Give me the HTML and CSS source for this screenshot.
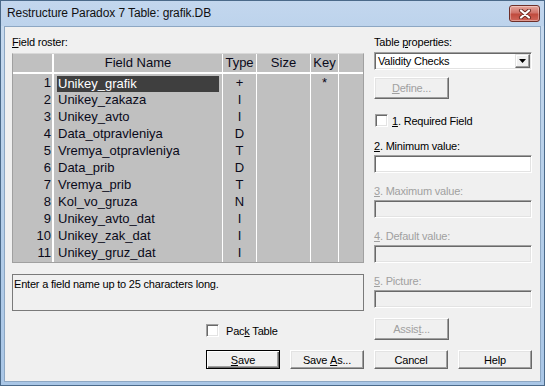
FILE: index.html
```html
<!DOCTYPE html>
<html lang="en">
<head>
    <meta charset="UTF-8">
    <title>Restructure Paradox 7 Table</title>
    <link rel="stylesheet" href="styles.css">
</head>
<body>
    <div class="window">
        <div class="titlebar">
            <span class="title">Restructure Paradox 7 Table: grafik.DB</span>
            <div class="close">
                <svg width="14" height="10" viewBox="0 0 14 10">
                    <path d="M3 1.5 L11 8.5 M11 1.5 L3 8.5" stroke="#6b2a22" stroke-width="4" stroke-linecap="round"/>
                    <path d="M3 1.5 L11 8.5 M11 1.5 L3 8.5" stroke="#fff" stroke-width="2.2" stroke-linecap="round"/>
                </svg>
            </div>
        </div>

        <div class="client">
            <div class="main">
                <div class="left">
                    <div class="label"><u>F</u>ield roster:</div>

                    <div class="roster">
                        <div class="col col-num">
                            <div class="head"></div>
                            <div class="cell">1</div>
                            <div class="cell">2</div>
                            <div class="cell">3</div>
                            <div class="cell">4</div>
                            <div class="cell">5</div>
                            <div class="cell">6</div>
                            <div class="cell">7</div>
                            <div class="cell">8</div>
                            <div class="cell">9</div>
                            <div class="cell">10</div>
                            <div class="cell">11</div>
                        </div>
                        <div class="col col-name">
                            <div class="head">Field Name</div>
                            <div class="cell"><span class="sel">Unikey_grafik</span></div>
                            <div class="cell">Unikey_zakaza</div>
                            <div class="cell">Unikey_avto</div>
                            <div class="cell">Data_otpravleniya</div>
                            <div class="cell">Vremya_otpravleniya</div>
                            <div class="cell">Data_prib</div>
                            <div class="cell">Vremya_prib</div>
                            <div class="cell">Kol_vo_gruza</div>
                            <div class="cell">Unikey_avto_dat</div>
                            <div class="cell">Unikey_zak_dat</div>
                            <div class="cell">Unikey_gruz_dat</div>
                        </div>
                        <div class="col col-type">
                            <div class="head">Type</div>
                            <div class="cell">+</div>
                            <div class="cell">I</div>
                            <div class="cell">I</div>
                            <div class="cell">D</div>
                            <div class="cell">T</div>
                            <div class="cell">D</div>
                            <div class="cell">T</div>
                            <div class="cell">N</div>
                            <div class="cell">I</div>
                            <div class="cell">I</div>
                            <div class="cell">I</div>
                        </div>
                        <div class="col col-size">
                            <div class="head">Size</div>
                        </div>
                        <div class="col col-key">
                            <div class="head">Key</div>
                            <div class="cell">*</div>
                        </div>
                        <div class="col col-end">
                            <div class="head"></div>
                        </div>
                    </div>

                    <div class="message">Enter a field name up to 25 characters long.</div>

                    <div class="pack">
                        <span class="check"></span>
                        <span>Pac<u>k</u> Table</span>
                    </div>
                </div>

                <div class="right">
                    <div class="label">Table <u>p</u>roperties:</div>
                    <div class="select">
                        <span class="select-text">Validity Checks</span>
                        <span class="arrow">
                            <svg width="7" height="4" viewBox="0 0 7 4"><path d="M0 0 H7 L3.5 4 Z" fill="#000"/></svg>
                        </span>
                    </div>
                    <div class="btn btn-define disabled"><u>D</u>efine...</div>

                    <div class="required">
                        <span class="check"></span>
                        <span><u>1</u>. Required Field</span>
                    </div>

                    <div class="group">
                        <div class="label"><u>2</u>. Minimum value:</div>
                        <div class="input"></div>
                    </div>
                    <div class="group off">
                        <div class="label"><u>3</u>. Maximum value:</div>
                        <div class="input"></div>
                    </div>
                    <div class="group off">
                        <div class="label"><u>4</u>. Default value:</div>
                        <div class="input"></div>
                    </div>
                    <div class="group off">
                        <div class="label"><u>5</u>. Picture:</div>
                        <div class="input"></div>
                    </div>

                    <div class="btn btn-define disabled">Assis<u>t</u>...</div>
                </div>
            </div>

            <div class="actions">
                <div class="btn default"><u>S</u>ave</div>
                <div class="btn">Save&nbsp;<u>A</u>s...</div>
                <div class="btn">Cancel</div>
                <div class="btn">Help</div>
            </div>
        </div>
    </div>
</body>
</html>
```

FILE: styles.css
```css
* {
    margin: 0;
    padding: 0;
    box-sizing: border-box;
}

body {
    width: 545px;
    height: 386px;
    overflow: hidden;
    font-family: 'Liberation Sans', Arial, sans-serif;
    font-size: 11px;
    color: #000;
}

.window {
    height: 386px;
    display: flex;
    flex-direction: column;
    border: 1px solid #4b6a8a;
    padding: 0 3px 3px;
    background: linear-gradient(#c9dbef, #b9d1ea 40%, #a9c6e6);
}

.titlebar {
    height: 25px;
    display: flex;
    align-items: flex-start;
    justify-content: space-between;
    margin: 0 -3px;
    padding-left: 6px;
    padding-right: 4px;
    background: linear-gradient(#c3d7ee, #bdd3ec);
}

.title {
    line-height: 24px;
    font-size: 12px;
    letter-spacing: -0.1px;
    color: #111;
}

.close {
    width: 31px;
    height: 17px;
    margin-top: 4px;
    display: flex;
    align-items: center;
    justify-content: center;
    border: 1px solid #6e2f29;
    border-radius: 3px;
    background: linear-gradient(#e7a69c, #d0736a 45%, #c04b3e 55%, #d0665a);
    box-shadow: inset 0 0 0 1px rgba(255, 255, 255, 0.35);
}

.client {
    flex: 1;
    background: #f0f0f0;
    border: 1px solid #8da7c3;
    padding: 9px 8px 0 7px;
    letter-spacing: -0.2px;
}

.main {
    display: flex;
    align-items: flex-start;
    gap: 10px;
}

.left {
    width: 352px;
}

.right {
    width: 158px;
}

.label {
    height: 13px;
    line-height: 13px;
}

u {
    text-decoration: underline;
    text-underline-offset: 1px;
}

/* field roster grid */
.roster {
    height: 210px;
    margin-top: 4px;
    display: flex;
    gap: 1px;
    background: #fff;
    border: 1px solid #a0a0a0;
    border-top-color: #d8d8d8;
    font-size: 13px;
    letter-spacing: 0;
    color: #0a0a1a;
}

.col {
    background: #c0c0c0;
    display: flex;
    flex-direction: column;
}

.head {
    height: 20px;
    line-height: 18px;
    border-bottom: 2px solid #fff;
    text-align: center;
    flex-shrink: 0;
}

.cell {
    height: 17px;
    line-height: 17px;
    white-space: nowrap;
    flex-shrink: 0;
}

.col-num {
    width: 39px;
    margin-right: 1px;
}

.col-num .cell {
    text-align: right;
    padding-right: 1px;
}

.col-name {
    width: 168px;
}

.col-name .cell {
    padding-left: 4px;
}

.col-name .sel {
    display: block;
    height: 16px;
    line-height: 16px;
    margin: 2px 3px 0 -1px;
    padding-left: 1px;
    background: #3f3f3f;
    color: #fff;
}

.col-type {
    width: 33px;
}

.col-type .cell,
.col-key .cell {
    text-align: center;
}

.col-size {
    width: 53px;
}

.col-key {
    width: 27px;
}

.col-end {
    width: 24px;
}

.message {
    height: 37px;
    margin-top: 11px;
    border: 1px solid #7a7a7a;
    padding: 2px 1px;
    line-height: 14px;
}

.pack {
    margin: 13px 0 0 194px;
    display: flex;
    align-items: center;
    gap: 7px;
    height: 13px;
}

.check {
    width: 13px;
    height: 13px;
    background: #fff;
    border: 1px solid;
    border-color: #a0a0a0 #fff #fff #a0a0a0;
    box-shadow: inset 1px 1px #696969, inset -1px -1px #e3e3e3;
    flex-shrink: 0;
}

/* right panel */
.select {
    height: 18px;
    margin-top: 3px;
    display: flex;
    align-items: center;
    justify-content: space-between;
    background: #fff;
    border: 1px solid;
    border-color: #a0a0a0 #fff #fff #a0a0a0;
    box-shadow: inset 1px 1px #696969, inset -1px -1px #e3e3e3;
    padding: 1px;
}

.select-text {
    padding-left: 2px;
    line-height: 14px;
}

.arrow {
    width: 15px;
    height: 14px;
    display: flex;
    align-items: center;
    justify-content: center;
    background: #f0f0f0;
    border: 1px solid;
    border-color: #e3e3e3 #696969 #696969 #e3e3e3;
    box-shadow: inset -1px -1px #a0a0a0, inset 1px 1px #fff;
}

.btn {
    height: 19px;
    width: 74px;
    display: flex;
    align-items: center;
    justify-content: center;
    white-space: pre;
    background: #f0f0f0;
    border: 1px solid;
    border-color: #fff #696969 #696969 #fff;
    box-shadow: inset -1px -1px #a0a0a0, inset 1px 1px #e3e3e3;
}

.btn-define {
    width: 75px;
    height: 22px;
    margin-top: 7px;
}

.btn.disabled {
    color: #a0a0a0;
}

.btn.default {
    border-color: #000;
    box-shadow: inset 1px 1px #fff, inset -1px -1px #696969, inset -2px -2px #a0a0a0;
}

.required {
    margin-top: 15px;
    height: 13px;
    display: flex;
    align-items: center;
    gap: 4px;
    padding-left: 1px;
}

.group {
    margin-top: 13px;
}

.group + .group {
    margin-top: 12px;
}

.group .label {
    margin-bottom: 2px;
}

.input {
    height: 18px;
    background: #fff;
    border: 1px solid;
    border-color: #a0a0a0 #fff #fff #a0a0a0;
    box-shadow: inset 1px 1px #696969, inset -1px -1px #e3e3e3;
}

.group.off .label {
    color: #a0a0a0;
}

.group.off .input {
    background: #f0f0f0;
}

.group + .btn-define {
    margin-top: 10px;
}

.actions {
    margin-top: 10px;
    display: flex;
    justify-content: flex-end;
    gap: 10px;
}
```
